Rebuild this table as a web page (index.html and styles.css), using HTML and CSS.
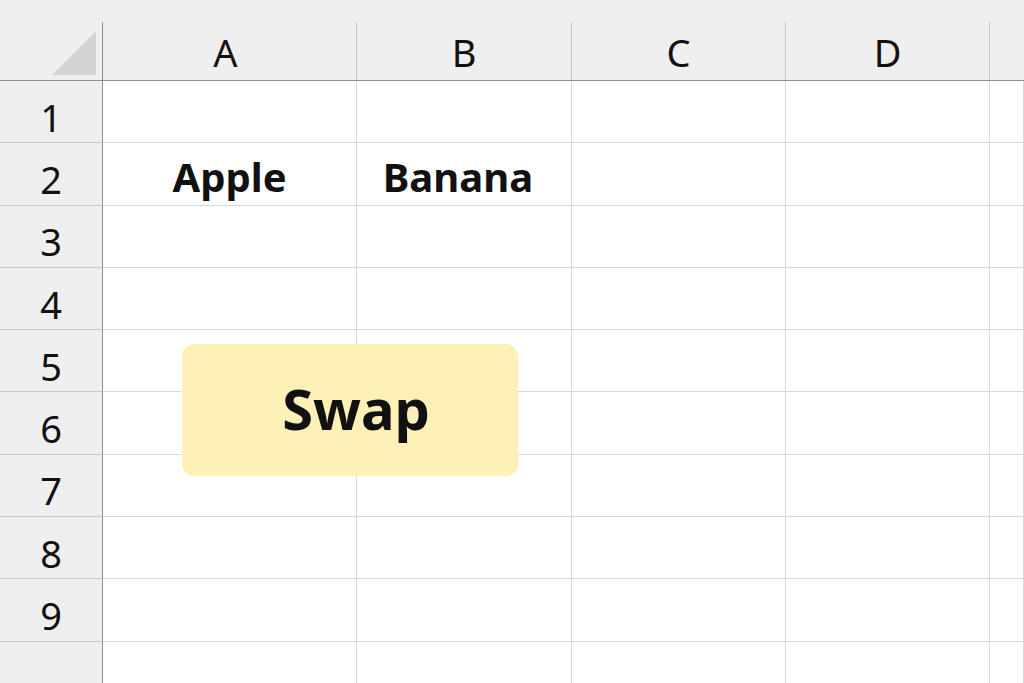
FILE: index.html
```html
<!DOCTYPE html>
<html>
<head>
<meta charset="utf-8">
<link rel="stylesheet" href="styles.css">
</head>
<body>
<div class="sheet">
  <div class="hdr corner"><div class="hin"><svg class="tri" width="44" height="44" viewBox="0 0 44 44"><polygon points="44,0 44,44 0,44" fill="#d3d3d3"/></svg></div></div>
  <div class="hdr col"><div class="hin hin-a">A</div></div>
  <div class="hdr col"><div class="hin">B</div></div>
  <div class="hdr col"><div class="hin">C</div></div>
  <div class="hdr col"><div class="hin">D</div></div>
  <div class="hdr col last"><div class="hin"></div></div>

  <div class="rh">1</div><div class="c"></div><div class="c"></div><div class="c"></div><div class="c"></div><div class="c"></div>
  <div class="rh">2</div><div class="c val">Apple</div><div class="c val val-b">Banana</div><div class="c"></div><div class="c"></div><div class="c"></div>
  <div class="rh">3</div><div class="c"></div><div class="c"></div><div class="c"></div><div class="c"></div><div class="c"></div>
  <div class="rh">4</div><div class="c"></div><div class="c"></div><div class="c"></div><div class="c"></div><div class="c"></div>
  <div class="rh">5</div><div class="c"></div><div class="c"></div><div class="c"></div><div class="c"></div><div class="c"></div>
  <div class="rh">6</div><div class="c"></div><div class="c"></div><div class="c"></div><div class="c"></div><div class="c"></div>
  <div class="rh">7</div><div class="c"></div><div class="c"></div><div class="c"></div><div class="c"></div><div class="c"></div>
  <div class="rh">8</div><div class="c"></div><div class="c"></div><div class="c"></div><div class="c"></div><div class="c"></div>
  <div class="rh">9</div><div class="c"></div><div class="c"></div><div class="c"></div><div class="c"></div><div class="c"></div>
  <div class="rh"></div><div class="c"></div><div class="c"></div><div class="c"></div><div class="c"></div><div class="c"></div>

  <div class="swap">Swap</div>
</div>
</body>
</html>
```
FILE: styles.css
```css
html, body {
  margin: 0;
  padding: 0;
  background: #ffffff;
}
body {
  width: 1024px;
  height: 683px;
  overflow: hidden;
  font-family: "Noto Sans", "Open Sans", sans-serif;
  color: #111111;
}
.sheet {
  position: relative;
  display: grid;
  grid-template-columns: 103px 254px 215px 214px 204px 34px;
  grid-template-rows: 81px repeat(10, 62.3px);
}
.hdr {
  background: #efefef;
  padding-top: 22px;
  border-bottom: 1px solid #8f8f8f;
  box-sizing: border-box;
  display: flex;
}
.hin {
  flex: 1;
  display: flex;
  align-items: center;
  justify-content: center;
  font-size: 38px;
  line-height: 1;
  padding-top: 2px;
}
.hin-a {
  padding-right: 8px;
}
.corner .hin {
  border-right: 1px solid #8f8f8f;
  justify-content: flex-end;
  align-items: flex-end;
  padding: 0 6px 5px 0;
}
.col .hin {
  border-right: 1px solid #c6c6c6;
}
.col.last .hin {
  border-right: none;
}
.rh {
  background: #efefef;
  border-right: 1px solid #8f8f8f;
  border-bottom: 1px solid #c9c9c9;
  box-sizing: border-box;
  display: flex;
  align-items: center;
  justify-content: center;
  font-size: 38px;
  line-height: 1;
  padding-top: 10px;
}
.c {
  border-right: 1px solid #d9d9d9;
  border-bottom: 1px solid #d9d9d9;
  box-sizing: border-box;
  display: flex;
  align-items: center;
  justify-content: center;
}
.val {
  font-weight: 700;
  font-size: 40px;
  line-height: 1;
  padding-top: 6px;
}
.val-b {
  padding-right: 12px;
}
.swap {
  position: absolute;
  left: 182px;
  top: 344px;
  width: 336px;
  height: 132px;
  border-radius: 12px;
  background: #fdf1b8;
  display: flex;
  align-items: center;
  justify-content: center;
  font-weight: 700;
  font-size: 56px;
  line-height: 1;
  padding: 0 0 4px 12px;
  box-sizing: border-box;
}
```
